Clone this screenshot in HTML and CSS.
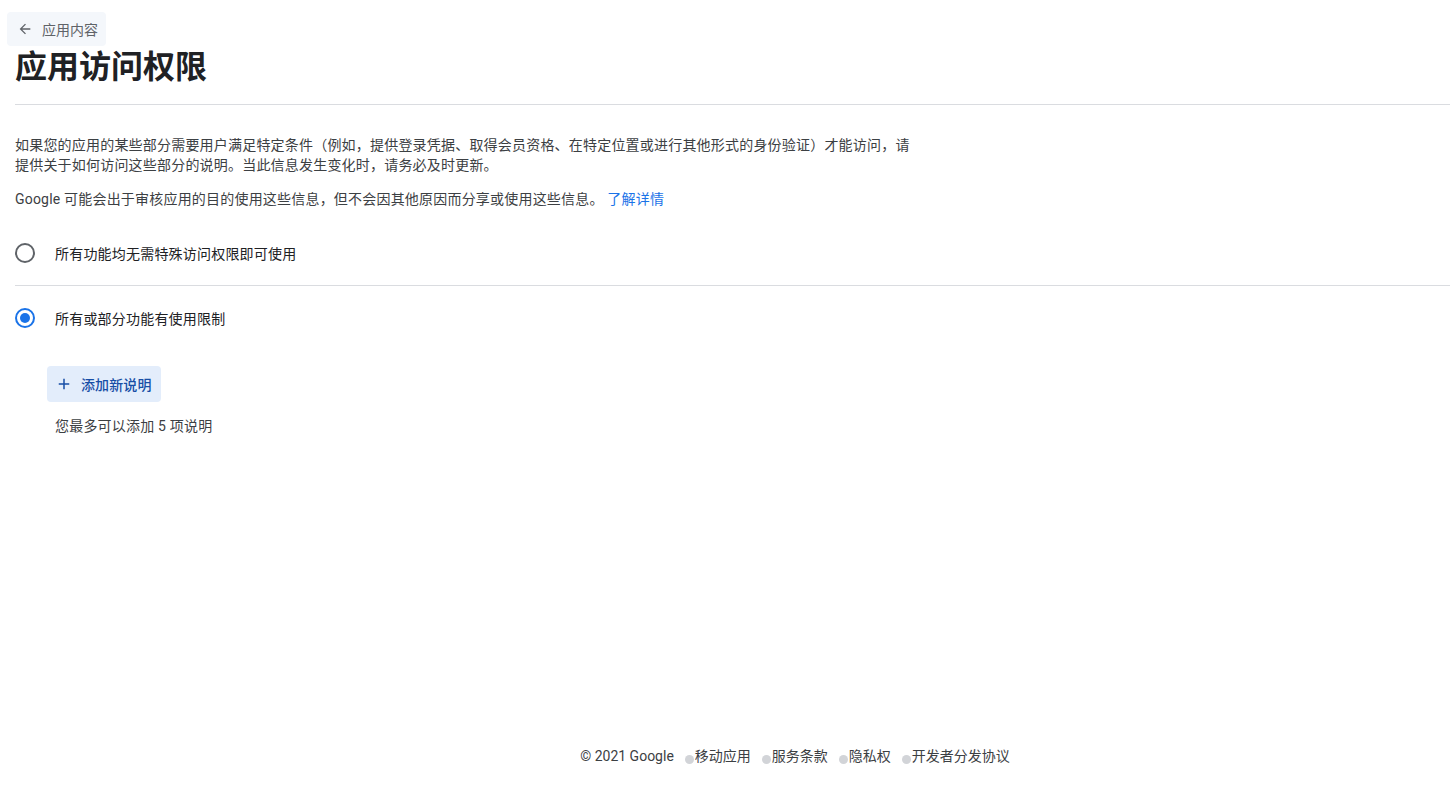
FILE: index.html
```html
<!DOCTYPE html>
<html lang="zh-CN">
<head>
    <meta charset="UTF-8">
    <title>应用访问权限</title>
    <link rel="stylesheet" href="styles.css">
</head>
<body>
    <div class="page">
        <main class="content">
            <a class="back-btn" href="#">
                <svg class="back-icon" viewBox="0 0 24 24" width="16" height="16"><path d="M20 11H7.83l5.59-5.59L12 4l-8 8 8 8 1.41-1.41L7.83 13H20v-2z"/></svg>
                <span>应用内容</span>
            </a>
            <h1 class="title">应用访问权限</h1>
            <hr class="divider">

            <p class="desc">如果您的应用的某些部分需要用户满足特定条件（例如，提供登录凭据、取得会员资格、在特定位置或进行其他形式的身份验证）才能访问，请提供关于如何访问这些部分的说明。当此信息发生变化时，请务必及时更新。</p>
            <p class="desc">Google 可能会出于审核应用的目的使用这些信息，但不会因其他原因而分享或使用这些信息。 <a class="link" href="#">了解详情</a></p>

            <div class="options">
                <label class="option">
                    <span class="radio"></span>
                    <span>所有功能均无需特殊访问权限即可使用</span>
                </label>
                <hr class="divider">
                <label class="option">
                    <span class="radio checked"></span>
                    <span>所有或部分功能有使用限制</span>
                </label>
            </div>

            <div class="instructions">
                <button class="add-btn">
                    <svg viewBox="0 0 24 24" width="18" height="18"><path d="M19 13h-6v6h-2v-6H5v-2h6V5h2v6h6v2z"/></svg>
                    <span>添加新说明</span>
                </button>
                <p class="hint">您最多可以添加 5 项说明</p>
            </div>
        </main>

        <footer class="footer">
            <span>© 2021 Google</span>
            <a href="#"><i class="dot"></i>移动应用</a>
            <a href="#"><i class="dot"></i>服务条款</a>
            <a href="#"><i class="dot"></i>隐私权</a>
            <a href="#"><i class="dot"></i>开发者分发协议</a>
        </footer>
    </div>
</body>
</html>
```

FILE: styles.css
```css
:root {
    --text: #202124;
    --text-muted: #5f6368;
    --blue: #1a73e8;
    --line: #dadce0;
}
body {
    margin: 0;
    font-family: Roboto, "Noto Sans CJK SC", sans-serif;
    color: var(--text);
    background: #fff;
}
.page {
    min-height: 100vh;
    display: flex;
    flex-direction: column;
}
.content {
    padding: 12px 0 0 15px;
}

.back-btn {
    display: inline-flex;
    align-items: center;
    gap: 9px;
    height: 34px;
    padding: 0 8px 0 10px;
    margin-left: -8px;
    border-radius: 4px;
    background: #f4f7fb;
    color: var(--text-muted);
    font-size: 14px;
    text-decoration: none;
}
.back-icon { fill: var(--text-muted); }

.title {
    margin: 1px 0 17px;
    font-size: 32px;
    line-height: 40px;
    font-weight: 700;
}
.divider {
    border: 0;
    border-top: 1px solid var(--line);
    margin: 0;
}

.desc {
    max-width: 900px;
    margin: 30px 0 0;
    font-size: 14px;
    line-height: 20px;
    letter-spacing: 0.2px;
    color: #3c4043;
}
.desc + .desc { margin-top: 14px; }
.link {
    color: var(--blue);
    text-decoration: none;
}

.options { margin-top: 12px; }
.option {
    display: flex;
    align-items: center;
    gap: 20px;
    height: 64px;
    font-size: 14px;
    letter-spacing: 0.2px;
}
.radio {
    width: 16px;
    height: 16px;
    border: 2px solid var(--text-muted);
    border-radius: 50%;
    display: flex;
    align-items: center;
    justify-content: center;
}
.radio.checked { border-color: var(--blue); }
.radio.checked::after {
    content: "";
    width: 10px;
    height: 10px;
    border-radius: 50%;
    background: var(--blue);
}

.instructions {
    padding: 16px 0 0 32px;
}
.add-btn {
    display: inline-flex;
    align-items: center;
    gap: 8px;
    height: 36px;
    padding: 0 9px 0 8px;
    border: 0;
    border-radius: 4px;
    background: #e3edfb;
    color: #174ea6;
    font-family: inherit;
    font-size: 14px;
    font-weight: 500;
    letter-spacing: 0.1px;
}
.add-btn svg { fill: #174ea6; }
.hint {
    margin: 13px 0 0 8px;
    font-size: 14px;
    letter-spacing: 0.2px;
    color: #3c4043;
}

.footer {
    margin-top: auto;
    display: flex;
    justify-content: center;
    align-items: baseline;
    gap: 11px;
    padding: 0 0 21px 140px;
    font-size: 14px;
    color: #3c4043;
}
.footer a {
    color: #3c4043;
    text-decoration: none;
}
.dot {
    display: inline-block;
    width: 9px;
    height: 9px;
    border-radius: 50%;
    background: #d2d4d8;
    margin-right: 1px;
    vertical-align: -3px;
}
```
